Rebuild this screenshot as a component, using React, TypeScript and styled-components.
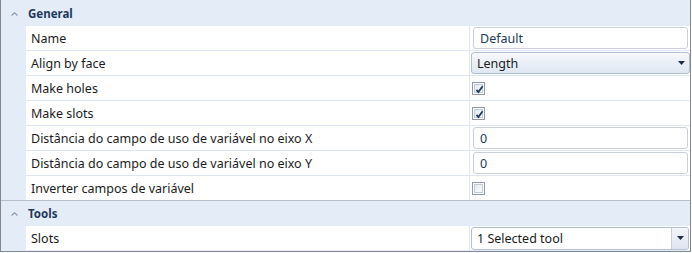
import React from "react";
import styled, { createGlobalStyle } from "styled-components";

const Global = createGlobalStyle`
  html, body { margin: 0; padding: 0; background: #ffffff; }
  body { font-family: "Noto Sans", "Open Sans", sans-serif; font-size: 12.5px; }
  * { box-sizing: border-box; }
`;

const Panel = styled.div`
  width: 691px;
  height: 252px;
  border-left: 1px solid #828790;
  border-right: 1px solid #828790;
  border-bottom: 1px solid #828790;
  background: #e4ecf7;
  display: flex;
  flex-direction: column;
  overflow: hidden;
`;

const CategoryHeader = styled.div<{ $first?: boolean }>`
  height: 26px;
  flex: none;
  display: flex;
  align-items: center;
  background: #e4ecf7;
  border-top: 1px solid ${(p) => (p.$first ? "#e4ecf7" : "#b6bfcc")};
  color: #1e395b;
  font-weight: 700;
  font-size: 11.5px;
`;

const Chevron = styled.span`
  width: 27px;
  flex: none;
  display: flex;
  justify-content: center;
  align-items: center;
`;

const Row = styled.div<{ $last?: boolean }>`
  height: ${(p) => (p.$last ? "24px" : "25px")};
  flex: none;
  display: flex;
`;

const Indent = styled.div`
  width: 25px;
  flex: none;
  background: #e4ecf7;
`;

const NameCell = styled.div<{ $last?: boolean }>`
  width: 443px;
  flex: none;
  background: #ffffff;
  border-bottom: ${(p) => (p.$last ? "none" : "1px solid #dde6f2")};
  display: flex;
  align-items: center;
  padding-left: 5px;
  color: #1b1b1b;
  white-space: nowrap;
`;

const ValueCell = styled.div<{ $last?: boolean }>`
  flex: 1;
  background: #ffffff;
  border-left: 1px solid #dde6f2;
  border-bottom: ${(p) => (p.$last ? "none" : "1px solid #dde6f2")};
  display: flex;
  align-items: center;
  min-width: 0;
`;

const TextBox = styled.div`
  flex: 1;
  height: 22px;
  margin: 0 2px 0 3px;
  border: 1px solid #c9d0da;
  border-radius: 3px;
  background: #ffffff;
  display: flex;
  align-items: center;
  padding-left: 6px;
  color: #1e395b;
`;

const Combo = styled.div`
  flex: 1;
  height: 22px;
  margin: 0 0 0 1px;
  border: 1px solid #b2bfd0;
  border-radius: 3px;
  background: linear-gradient(#f6f8fc, #dfe7f2);
  display: flex;
  align-items: center;
  padding-left: 5px;
  color: #1b1b1b;
`;

const ComboText = styled.span`
  flex: 1;
`;

const Arrow = styled.span`
  width: 16px;
  flex: none;
  display: flex;
  justify-content: center;
  align-items: center;
`;

const EditCombo = styled.div`
  flex: 1;
  height: 23px;
  margin: 0 1px 0 1px;
  border: 1px solid #b2bfd0;
  border-radius: 3px;
  background: #ffffff;
  display: flex;
  align-items: stretch;
  color: #1b1b1b;
  overflow: hidden;
`;

const EditText = styled.span`
  flex: 1;
  display: flex;
  align-items: center;
  padding-left: 5px;
`;

const DropButton = styled.span`
  width: 17px;
  flex: none;
  border-left: 1px solid #c5cfdc;
  background: linear-gradient(#f3f6fa, #dde5f0);
  display: flex;
  justify-content: center;
  align-items: center;
`;

const CheckBox = styled.span`
  width: 13px;
  height: 13px;
  margin-left: 2px;
  border: 1px solid #8e9aab;
  background: #ffffff;
  display: flex;
  justify-content: center;
  align-items: center;
  padding: 1px;
`;

const CheckInner = styled.span`
  width: 100%;
  height: 100%;
  border: 1px solid #c3cbd7;
  background: linear-gradient(135deg, #e3e8f0, #fbfcfd);
  display: flex;
  justify-content: center;
  align-items: center;
  position: relative;
`;

const Triangle = () => (
  <svg width="7" height="4" viewBox="0 0 7 4">
    <path d="M0 0 H7 L3.5 4 Z" fill="#1e2f45" />
  </svg>
);

const ChevronIcon = () => (
  <svg width="7" height="4" viewBox="0 0 7 4">
    <path d="M0.5 3.5 L3.5 0.8 L6.5 3.5" fill="none" stroke="#8a9bb3" strokeWidth="1.2" />
  </svg>
);

const Check = ({ checked }: { checked: boolean }) => (
  <CheckBox>
    <CheckInner>
      {checked && (
        <svg width="9" height="9" viewBox="0 0 9 9" style={{ position: "absolute", left: 0, top: 0 }}>
          <path d="M1.5 4.8 L3.4 7 L7.6 1.2" fill="none" stroke="#1f3a5f" strokeWidth="1.8" />
        </svg>
      )}
    </CheckInner>
  </CheckBox>
);

type Value =
  | { kind: "text"; text: string }
  | { kind: "combo"; text: string }
  | { kind: "editcombo"; text: string }
  | { kind: "check"; checked: boolean };

type Prop = { name: string; value: Value };

const categories: { title: string; props: Prop[] }[] = [
  {
    title: "General",
    props: [
      { name: "Name", value: { kind: "text", text: "Default" } },
      { name: "Align by face", value: { kind: "combo", text: "Length" } },
      { name: "Make holes", value: { kind: "check", checked: true } },
      { name: "Make slots", value: { kind: "check", checked: true } },
      { name: "Distância do campo de uso de variável no eixo X", value: { kind: "text", text: "0" } },
      { name: "Distância do campo de uso de variável no eixo Y", value: { kind: "text", text: "0" } },
      { name: "Inverter campos de variável", value: { kind: "check", checked: false } },
    ],
  },
  {
    title: "Tools",
    props: [{ name: "Slots", value: { kind: "editcombo", text: "1 Selected tool" } }],
  },
];

const renderValue = (v: Value) => {
  switch (v.kind) {
    case "text":
      return <TextBox>{v.text}</TextBox>;
    case "combo":
      return (
        <Combo>
          <ComboText>{v.text}</ComboText>
          <Arrow>
            <Triangle />
          </Arrow>
        </Combo>
      );
    case "editcombo":
      return (
        <EditCombo>
          <EditText>{v.text}</EditText>
          <DropButton>
            <Triangle />
          </DropButton>
        </EditCombo>
      );
    case "check":
      return <Check checked={v.checked} />;
  }
};

export default function App() {
  return (
    <>
      <Global />
      <Panel>
        {categories.map((c, ci) => (
          <React.Fragment key={c.title}>
            <CategoryHeader $first={ci === 0}>
              <Chevron>
                <ChevronIcon />
              </Chevron>
              {c.title}
            </CategoryHeader>
            {c.props.map((p, pi) => {
              const last = pi === c.props.length - 1;
              return (
                <Row key={p.name} $last={last}>
                  <Indent />
                  <NameCell $last={last}>{p.name}</NameCell>
                  <ValueCell $last={last}>{renderValue(p.value)}</ValueCell>
                </Row>
              );
            })}
          </React.Fragment>
        ))}
      </Panel>
    </>
  );
}
